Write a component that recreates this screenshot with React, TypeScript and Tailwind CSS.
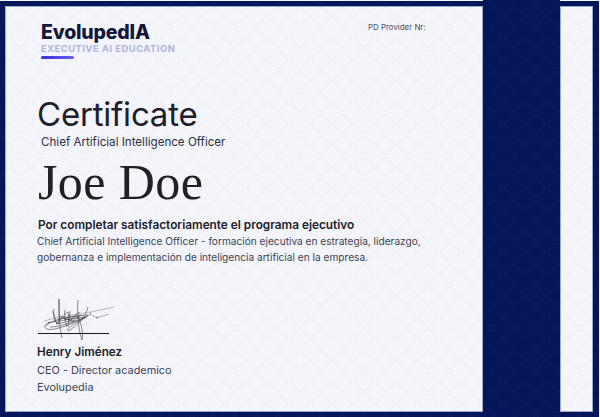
export default function App() {
  const Strip = () => <div className="h-px bg-[#f3f5fa]" />;
  return (
    <div className="relative w-[600px] h-[417px] overflow-hidden flex bg-[#04155a] font-['Inter',sans-serif]">
      <div className="w-[483px] flex flex-col">
        <Strip />
        <div className="flex-1 pt-[5px] pb-[5px] pl-[5px]">
          <div className="h-full bg-[#f3f5fa] border border-[#a3a9cb] pl-[32px] flex flex-col text-[#1f2430]">
            <div className="flex pt-[15px] h-[89px]">
              <div className="w-[330px] pl-[3px] flex flex-col">
                <div className="text-[19.5px] leading-[21px] font-extrabold text-[#14163a] tracking-[-0.2px]">EvolupedIA</div>
                <div className="text-[9.3px] leading-[11px] font-bold text-[#b0b4da] tracking-[0.55px]">EXECUTIVE AI EDUCATION</div>
                <div className="mt-[2px] w-[33px] h-[3px] rounded-full bg-gradient-to-r from-[#3a2bdc] to-[#6d5ff2]" />
              </div>
              <div className="text-[7.9px] leading-[10px] text-[#4a5068]">PD Provider Nr:</div>
            </div>
            <div className="text-[33px] leading-[36px] text-[#1d2029] -ml-px tracking-[-0.2px]">Certificate</div>
            <div className="text-[11.6px] leading-[16px] pl-[3px] mt-[2px] text-[#2c3140]">Chief Artificial Intelligence Officer</div>
            <div className="font-['Liberation_Serif',serif] text-[50px] leading-[52px] mt-[6px] text-[#1f2026] tracking-[0.4px]">Joe Doe</div>
            <div className="text-[11.8px] leading-[16px] font-semibold mt-[9px] text-[#1d2029]">Por completar satisfactoriamente el programa ejecutivo</div>
            <div className="text-[10.15px] leading-[16px] text-[#3d4354] -ml-px whitespace-nowrap">
              Chief Artificial Intelligence Officer - formación ejecutiva en estrategia, liderazgo,
              <br />
              gobernanza e implementación de inteligencia artificial en la empresa.
            </div>
            <div className="mt-[21px] h-[47px] w-[90px] relative">
              <svg viewBox="0 0 100 60" className="absolute left-[-8px] top-0 w-[100px] h-[60px]" fill="none" stroke="#2f2f35" strokeWidth="0.55">
                <path d="M14 35 C30 30 60 27 84 21" stroke="#8a8a90" />
                <path d="M16 40 C22 32 48 30 58 29 C50 35 24 46 17 43 C13 41 15 38 20 36" />
                <path d="M18 37 C30 34 46 33 56 31 C44 36 30 41 20 41" />
                <path d="M24 23 C22 30 26 40 29 37 C30 30 29 12 29 13 C28 25 30 45 32 52" />
                <path d="M22 26 C24 24 25 34 27 38 C30 34 34 28 38 26 C40 32 36 38 42 33 C44 30 48 26 50 27" />
                <path d="M35 24 C34 30 35 36 37 40 M40 25 C40 31 38 36 38 41" />
                <path d="M48 14 C47 25 48 44 52 54 C54 46 50 35 48 30" />
                <path d="M58 21 C56 28 52 36 40 44 C34 46 40 40 46 37 C52 34 60 30 61 26" />
                <path d="M60 28 C66 33 72 30 66 32 C70 31 76 29 79 28" stroke="#77777d" />
                <path d="M30 30 L44 36 M34 34 L50 31 M26 38 L46 34 M28 33 L52 29" />
              </svg>
            </div>
            <div className="w-[71px] h-px bg-[#18181b]" />
            <div className="text-[11.7px] leading-[16px] font-semibold mt-[10px] -ml-px text-[#1d2029]">Henry Jiménez</div>
            <div className="text-[10.9px] leading-[17px] mt-[2px] -ml-px text-[#3d4354]">CEO - Director academico</div>
            <div className="text-[10.9px] leading-[17px] -ml-px text-[#3d4354]">Evolupedia</div>
          </div>
        </div>
      </div>
      <div className="w-[77px]" />
      <div className="w-[40px] flex flex-col">
        <Strip />
        <div className="flex-1 flex flex-col pt-[5px] pb-[5px] pr-[6px] border-r border-[#f3f5fa]">
          <div className="flex-1 bg-[#f3f5fa] border border-[#a3a9cb]" />
        </div>
      </div>
      <svg className="absolute inset-0 pointer-events-none" width="600" height="417">
        <defs>
          <pattern id="p" width="21.5" height="21.5" patternUnits="userSpaceOnUse" x="9.2" y="5.5">
            <path d="M2 9.2 L9.2 2 Q10.75 0.8 12.3 2 L19.5 9.2 Q20.7 10.75 19.5 12.3 L12.3 19.5 Q10.75 20.7 9.2 19.5 L2 12.3 Q0.8 10.75 2 9.2Z" fill="none" stroke="#70768f" strokeOpacity="0.09" strokeWidth="0.7" />
          </pattern>
        </defs>
        <rect width="600" height="417" fill="url(#p)" />
      </svg>
    </div>
  );
}
